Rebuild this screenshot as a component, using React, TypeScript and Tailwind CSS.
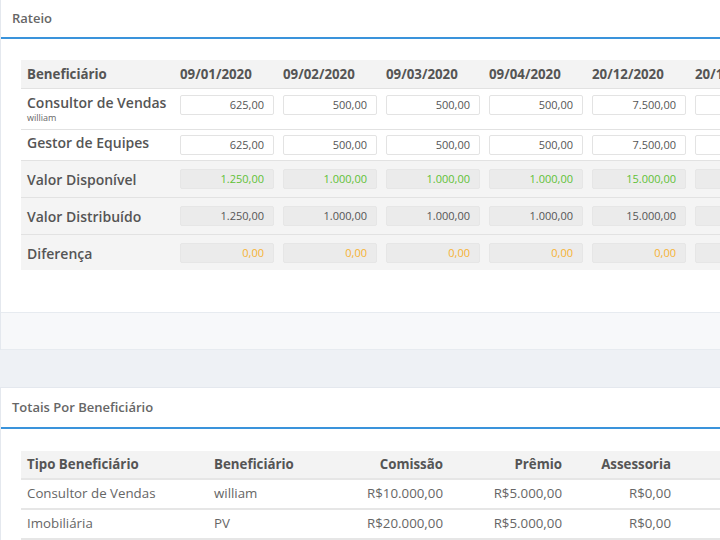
const dates = ["09/01/2020", "09/02/2020", "09/03/2020", "09/04/2020", "20/12/2020", "20/12/2020"];

const consultor = ["625,00", "500,00", "500,00", "500,00", "7.500,00", "7.500,00"];
const gestor = ["625,00", "500,00", "500,00", "500,00", "7.500,00", "7.500,00"];
const disponivel = ["1.250,00", "1.000,00", "1.000,00", "1.000,00", "15.000,00", "15.000,00"];
const distribuido = ["1.250,00", "1.000,00", "1.000,00", "1.000,00", "15.000,00", "15.000,00"];
const diferenca = ["0,00", "0,00", "0,00", "0,00", "0,00", "0,00"];

const ValueInput = ({ value }: { value: string }) => (
  <div className="h-[20px] w-[94px] rounded-[2px] border border-[#e3e3e3] bg-white px-[9px] text-right text-[11px] leading-[18px] text-[#555]">
    {value}
  </div>
);

const ReadOnly = ({ value, color }: { value: string; color: string }) => (
  <div className={`h-[20px] w-[94px] rounded-[2px] border border-[#e6e6e6] bg-[#ebebeb] px-[9px] text-right text-[11px] leading-[18px] ${color}`}>
    {value}
  </div>
);

const CardHeader = ({ title, tall }: { title: string; tall?: boolean }) => (
  <div className={`flex items-center border-b-2 border-[#3a93db] px-[11px] ${tall ? "h-[41px]" : "h-[39px]"}`}>
    <span className="text-[13px] font-semibold text-[#666]">{title}</span>
  </div>
);

export default function App() {
  return (
    <div className="h-[540px] w-[720px] overflow-hidden bg-[#eef1f5] text-[#555]" style={{ fontFamily: '"Open Sans", sans-serif' }}>
      {/* Rateio */}
      <div className="w-[900px] border-l border-[#e4e8ee] bg-white">
        <CardHeader title="Rateio" />
        <div className="px-[20px] pt-[21px] pb-[42px]">
          <div className="w-[860px]">
            <div className="flex h-[29px] items-center border-b border-[#e2e2e2] bg-[#f3f3f3] pt-[2px]">
              <div className="w-[154px] px-[6px] text-[13.3px] font-bold">Beneficiário</div>
              {dates.map((d, i) => (
                <div key={i} className="w-[103px] pl-[5px] text-[13.3px] font-bold">{d}</div>
              ))}
            </div>
            <div className="flex h-[41px] border-b border-[#e2e2e2]">
              <div className="w-[154px] whitespace-nowrap px-[6px] pt-[4px]">
                <div className="text-[14px] font-semibold leading-[20px]">Consultor de Vendas</div>
                <div className="text-[9px] leading-[10px] text-[#666]">william</div>
              </div>
              {consultor.map((v, i) => (
                <div key={i} className="w-[103px] pl-[5px] pt-[6px]"><ValueInput value={v} /></div>
              ))}
            </div>
            <div className="flex h-[31px] border-b border-[#e2e2e2]">
              <div className="w-[154px] whitespace-nowrap px-[6px] pt-[3px] text-[14px] font-semibold leading-[20px]">Gestor de Equipes</div>
              {gestor.map((v, i) => (
                <div key={i} className="w-[103px] pl-[5px] pt-[5px]"><ValueInput value={v} /></div>
              ))}
            </div>
            <div className="flex h-[37px] items-center border-b border-[#e2e2e2] bg-[#f4f4f4]">
              <div className="w-[154px] whitespace-nowrap px-[6px] pt-[1px] text-[14px] font-semibold">Valor Disponível</div>
              {disponivel.map((v, i) => (
                <div key={i} className="w-[103px] pl-[5px]"><ReadOnly value={v} color="text-[#5fc136]" /></div>
              ))}
            </div>
            <div className="flex h-[37px] items-center border-b border-[#e2e2e2] bg-[#f4f4f4]">
              <div className="w-[154px] whitespace-nowrap px-[6px] pt-[1px] text-[14px] font-semibold">Valor Distribuído</div>
              {distribuido.map((v, i) => (
                <div key={i} className="w-[103px] pl-[5px]"><ReadOnly value={v} color="text-[#555]" /></div>
              ))}
            </div>
            <div className="flex h-[35px] items-center bg-[#f4f4f4]">
              <div className="w-[154px] whitespace-nowrap px-[6px] pt-[1px] text-[14px] font-semibold">Diferença</div>
              {diferenca.map((v, i) => (
                <div key={i} className="w-[103px] pl-[5px]"><ReadOnly value={v} color="text-[#f6b232]" /></div>
              ))}
            </div>
          </div>
        </div>
        <div className="h-[38px] border-t border-b border-[#e7ebf0] bg-[#f7f8fa]" />
      </div>

      <div className="h-[37px]" />

      {/* Totais Por Beneficiário */}
      <div className="w-[900px] border-l border-t border-[#e4e8ee] bg-white">
        <CardHeader title="Totais Por Beneficiário" tall />
        <div className="px-[20px] pt-[22px] pb-[20px]">
          <div className="w-[860px] text-[13.3px]">
            <div className="flex h-[29px] items-center border-b-2 border-[#e6e6e6] bg-[#f3f3f3] font-bold">
              <div className="w-[187px] px-[6px]">Tipo Beneficiário</div>
              <div className="w-[122px] px-[6px]">Beneficiário</div>
              <div className="w-[119px] px-[6px] text-right">Comissão</div>
              <div className="w-[119px] px-[6px] text-right">Prêmio</div>
              <div className="w-[109px] px-[6px] text-right">Assessoria</div>
              <div className="w-[136px] px-[6px] text-right">Total</div>
            </div>
            {[
              ["Consultor de Vendas", "william", "R$10.000,00", "R$5.000,00", "R$0,00", "R$15.000,00"],
              ["Imobiliária", "PV", "R$20.000,00", "R$5.000,00", "R$0,00", "R$25.000,00"],
            ].map((r, i) => (
              <div key={i} className="flex h-[30px] items-center border-b-2 border-[#e6e6e6] text-[#666]">
                <div className="w-[187px] px-[6px]">{r[0]}</div>
                <div className="w-[122px] px-[6px]">{r[1]}</div>
                <div className="w-[119px] px-[6px] text-right">{r[2]}</div>
                <div className="w-[119px] px-[6px] text-right">{r[3]}</div>
                <div className="w-[109px] px-[6px] text-right">{r[4]}</div>
                <div className="w-[136px] px-[6px] text-right">{r[5]}</div>
              </div>
            ))}
          </div>
        </div>
      </div>
    </div>
  );
}
